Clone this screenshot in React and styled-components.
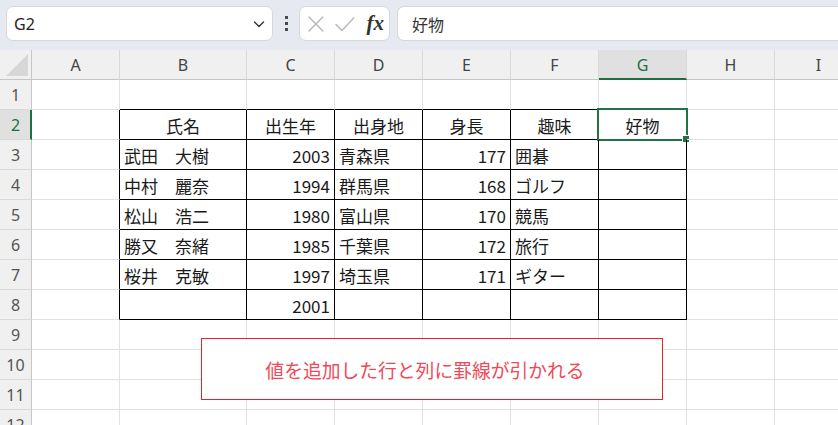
import styled, { createGlobalStyle } from "styled-components";

const GlobalStyle = createGlobalStyle`
  html, body {
    margin: 0;
    padding: 0;
    background: #ffffff;
    overflow: hidden;
  }
  body {
    font-family: "Noto Sans CJK JP", "Noto Sans", sans-serif;
    color: #1f1f1f;
  }
`;

const Window = styled.div`
  width: 838px;
  height: 425px;
  overflow: hidden;
  display: flex;
  flex-direction: column;
`;

const FormulaBar = styled.div`
  display: flex;
  align-items: center;
  height: 50px;
  box-sizing: border-box;
  padding: 6px 0 9px 6px;
  background: #e6e9ef;
`;

const Box = styled.div`
  height: 35px;
  box-sizing: border-box;
  background: #ffffff;
  border: 1px solid #d6d8dc;
  border-radius: 7px;
  display: flex;
  align-items: center;
`;

const NameBox = styled(Box)`
  width: 267px;
  padding: 0 6px 0 7px;
  justify-content: space-between;
  font-family: "Noto Sans", sans-serif;
  font-size: 16px;
  color: #242424;
`;

const Dots = styled.div`
  display: flex;
  flex-direction: column;
  gap: 3px;
  margin: 0 11px 0 12px;

  > span {
    width: 3px;
    height: 3px;
    background: #4a4a4a;
  }
`;

const FxBox = styled(Box)`
  width: 91px;
  padding: 0 5px 0 6px;
  gap: 8px;
`;

const FxLabel = styled.span`
  font-family: "Liberation Serif", "DejaVu Serif", serif;
  font-style: italic;
  font-weight: bold;
  font-size: 21px;
  line-height: 1;
  color: #333333;
  margin-left: 3px;
`;

const FormulaInput = styled(Box)`
  flex: 1;
  margin-left: 7px;
  border-right: none;
  border-radius: 7px 0 0 7px;
  padding-left: 14px;
  font-size: 16px;
  color: #333333;
`;

const SheetArea = styled.div`
  position: relative;
  flex: 1;
  overflow: hidden;
`;

const Grid = styled.div`
  display: grid;
  grid-template-columns: 32px 88px 127px repeat(7, 88px);
  grid-auto-rows: 30px;
  width: 863px;
`;

const Corner = styled.div`
  position: relative;
  background: #f0f0f0;
  border-right: 1px solid #c6c6c6;
  border-bottom: 1px solid #c6c6c6;
  box-sizing: border-box;

  &::after {
    content: "";
    position: absolute;
    right: 3px;
    bottom: 3px;
    border-style: solid;
    border-width: 0 0 22px 22px;
    border-color: transparent transparent #d7d7d7 transparent;
  }
`;

const ColHead = styled.div`
  display: flex;
  align-items: center;
  justify-content: center;
  box-sizing: border-box;
  background: ${(p) => (p.$selected ? "#e0e0e0" : "#f0f0f0")};
  border-right: 1px solid #d9d9d9;
  border-bottom: ${(p) => (p.$selected ? "2px solid #1e6e43" : "1px solid #c6c6c6")};
  font-family: "Noto Sans", sans-serif;
  font-size: 16px;
  color: ${(p) => (p.$selected ? "#1e6e43" : "#444444")};
  padding-top: ${(p) => (p.$selected ? "1px" : "0")};
`;

const RowHead = styled.div`
  display: flex;
  align-items: center;
  justify-content: center;
  box-sizing: border-box;
  background: ${(p) => (p.$selected ? "#e0e0e0" : "#f0f0f0")};
  border-right: ${(p) => (p.$selected ? "2px solid #1e6e43" : "1px solid #c6c6c6")};
  border-bottom: 1px solid #d9d9d9;
  font-family: "Noto Sans", sans-serif;
  font-size: 16px;
  color: ${(p) => (p.$selected ? "#1e6e43" : "#555555")};
  padding-left: ${(p) => (p.$selected ? "1px" : "0")};
`;

const Cell = styled.div`
  position: relative;
  display: flex;
  align-items: center;
  justify-content: ${(p) =>
    p.$align === "right" ? "flex-end" : p.$align === "center" ? "center" : "flex-start"};
  box-sizing: border-box;
  padding: 2px 4px 0 4px;
  border-right: 1px solid ${(p) => (p.$bR ? "#000000" : "#e1e1e1")};
  border-bottom: 1px solid ${(p) => (p.$bB ? "#000000" : "#e1e1e1")};
  font-size: 17px;
  color: #1a1a1a;
  white-space: nowrap;
`;

const Selection = styled.div`
  position: absolute;
  top: -2px;
  left: -2px;
  right: -2px;
  bottom: -2px;
  border: 2px solid #217346;
  pointer-events: none;

  &::after {
    content: "";
    position: absolute;
    right: -4px;
    bottom: -4px;
    width: 6px;
    height: 6px;
    background: #217346;
    border: 1px solid #ffffff;
  }
`;

const Callout = styled.div`
  position: absolute;
  left: 201px;
  top: 288px;
  width: 462px;
  height: 62px;
  box-sizing: border-box;
  background: #ffffff;
  border: 1px solid #e3222c;
  display: flex;
  align-items: center;
  justify-content: center;
  padding-right: 14px;
  font-size: 18.8px;
  color: #ef4a58;
`;

const columns = ["A", "B", "C", "D", "E", "F", "G", "H", "I"];

const data = {
  2: ["", "氏名", "出生年", "出身地", "身長", "趣味", "好物"],
  3: ["", "武田　大樹", 2003, "青森県", 177, "囲碁", ""],
  4: ["", "中村　麗奈", 1994, "群馬県", 168, "ゴルフ", ""],
  5: ["", "松山　浩二", 1980, "富山県", 170, "競馬", ""],
  6: ["", "勝又　奈緒", 1985, "千葉県", 172, "旅行", ""],
  7: ["", "桜井　克敏", 1997, "埼玉県", 171, "ギター", ""],
  8: ["", "", 2001, "", "", "", ""],
};

const ChevronIcon = () => (
  <svg width="14" height="14" viewBox="0 0 14 14" fill="none">
    <path d="M2.5 5l4.5 4.5L11.5 5" stroke="#333" strokeWidth="1.4" strokeLinecap="round" strokeLinejoin="round" />
  </svg>
);

const CancelIcon = () => (
  <svg width="20" height="20" viewBox="0 0 20 20" fill="none">
    <path d="M3 3l14 14M17 3L3 17" stroke="#b9b9b9" strokeWidth="1.5" strokeLinecap="round" />
  </svg>
);

const EnterIcon = () => (
  <svg width="22" height="20" viewBox="0 0 22 20" fill="none">
    <path d="M2 10.5l6 6L20 4" stroke="#b9b9b9" strokeWidth="1.5" strokeLinecap="round" strokeLinejoin="round" />
  </svg>
);

function cellProps(row, col) {
  // table B2:G8 gets black borders; A2:A8 right edge and B1:G1 bottom edge touch it
  const inRows = row >= 2 && row <= 8;
  const tableCol = col >= 1 && col <= 6;
  return {
    $bR: inRows && col >= 0 && col <= 6,
    $bB: tableCol && row >= 1 && row <= 8,
  };
}

function alignFor(row, value) {
  if (row === 2) return "center";
  return typeof value === "number" ? "right" : "left";
}

export default function App() {
  const rows = Array.from({ length: 12 }, (_, i) => i + 1);
  return (
    <Window>
      <GlobalStyle />
      <FormulaBar>
        <NameBox>
          <span>G2</span>
          <ChevronIcon />
        </NameBox>
        <Dots>
          <span />
          <span />
          <span />
        </Dots>
        <FxBox>
          <CancelIcon />
          <EnterIcon />
          <FxLabel>fx</FxLabel>
        </FxBox>
        <FormulaInput>好物</FormulaInput>
      </FormulaBar>
      <SheetArea>
        <Grid>
          <Corner />
          {columns.map((c) => (
            <ColHead key={c} $selected={c === "G"}>
              {c}
            </ColHead>
          ))}
          {rows.map((r) => (
            <Row key={r} row={r} />
          ))}
        </Grid>
        <Callout>値を追加した行と列に罫線が引かれる</Callout>
      </SheetArea>
    </Window>
  );
}

function Row({ row }) {
  const values = data[row] || [];
  return (
    <>
      <RowHead $selected={row === 2}>{row}</RowHead>
      {columns.map((c, i) => {
        const v = values[i] ?? "";
        return (
          <Cell key={c} $align={alignFor(row, v)} {...cellProps(row, i)}>
            {v}
            {row === 2 && c === "G" && <Selection />}
          </Cell>
        );
      })}
    </>
  );
}
